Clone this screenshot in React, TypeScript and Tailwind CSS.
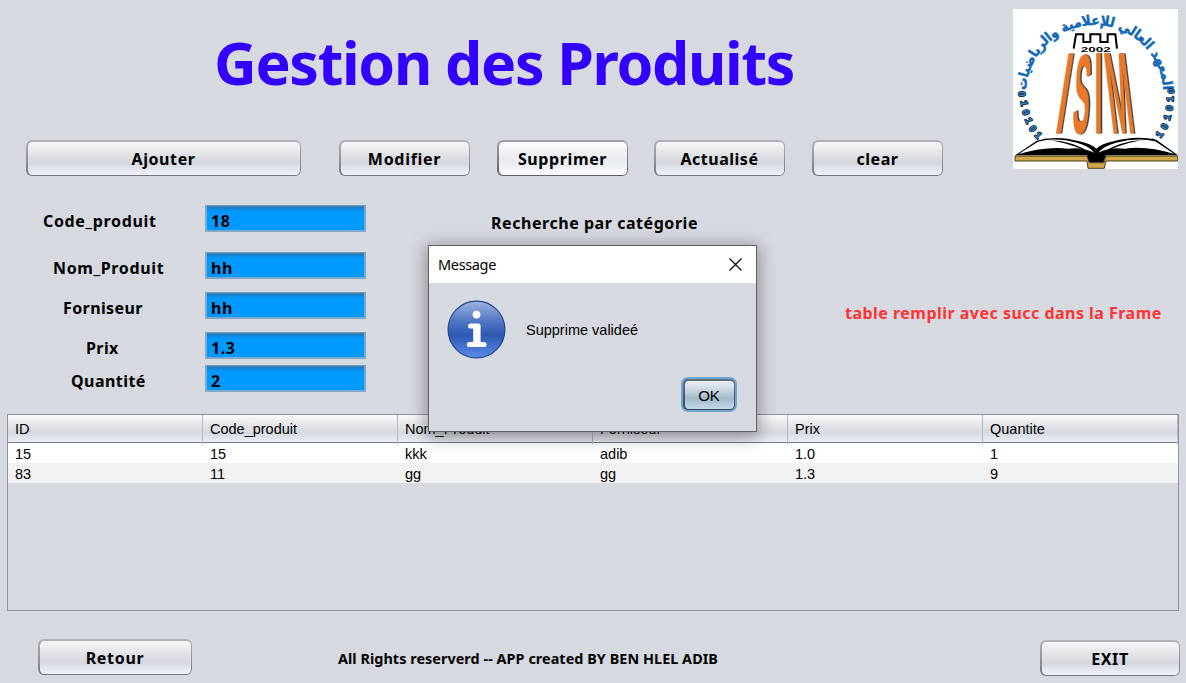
import type { ReactNode } from "react";

const LABEL = "font-['Noto_Sans',sans-serif] font-bold text-[16px] whitespace-nowrap text-black";

function NimbusButton({ children, className, textClass = "", bright = false }: { children: ReactNode; className: string; textClass?: string; bright?: boolean }) {
  const fill = bright
    ? "bg-[linear-gradient(#fbfcfd,#e9ebf0_50%,#e9ecf1_65%,#fdfdff)]"
    : "bg-[linear-gradient(#f6f7f8,#dddfe3_45%,#d5d8de_65%,#f0f3fa)]";
  const edge = bright
    ? "bg-[linear-gradient(#a0a3a9,#5c5f66)]"
    : "bg-[linear-gradient(#b0b3b8,#74777d)]";
  return (
    <button className={`h-9 shrink-0 rounded-[6px] p-[1.5px] ${edge} ${className}`}>
      <span className={`flex h-full items-center justify-center rounded-[4.5px] pt-[2px] ${fill} ${LABEL} ${textClass}`}>{children}</span>
    </button>
  );
}

function FieldRow({ label, value, className, labelClass }: { label: string; value: string; className: string; labelClass: string }) {
  return (
    <div className={`flex h-[27px] ${className}`}>
      <label className={`w-[205px] shrink-0 pt-[3px] leading-[27px] ${LABEL} ${labelClass}`}>{label}</label>
      <div className={`w-[161px] overflow-hidden border-2 border-t-[1px] border-[#7fa9cb] border-t-[#6c9dbd] bg-[linear-gradient(#4282ae,#1a7fc9_2px,#0a92f1_4px,#0099ff_6px)] pt-[2px] pl-[4px] leading-[27px] tracking-[0.5px] ${LABEL}`}>{value}</div>
    </div>
  );
}

const LEFT_BITS: [number, number, number, string][] = [
  [48, 282, 88, "0"], [55, 310, 80, "1"], [60, 337, 74, "0"], [69, 362, 66, "1"], [80, 386, 58, "0"], [97, 406, 48, "1"], [115, 427, 40, "0"],
];
const RIGHT_BITS: [number, number, number, string][] = [
  [493, 273, -90, "0"], [492, 297, -88, "1"], [490, 324, -82, "0"], [484, 352, -74, "1"], [475, 379, -64, "0"], [460, 403, -54, "1"], [441, 427, -44, "0"],
];

function Logo() {
  return (
    <svg className="mt-[9px] h-[160px] w-[165px] shrink-0 bg-white" viewBox="21 27 495 480">
      <defs>
        <path id="arc" d="M60 290 V281 A206 206 0 0 1 472 281 V290" />
      </defs>
      <text fontFamily="'DejaVu Sans Condensed', 'DejaVu Sans'" fontWeight="bold" fontSize="41" fill="#1268b8" stroke="#1268b8" strokeWidth="1.5" direction="rtl">
        <textPath href="#arc" startOffset="50%" textAnchor="middle">المعهد العالي للإعلامية والرياضيات</textPath>
      </text>
      <path d="M203 146 L210 103 H232 V126 H253 V103 H283 V126 H305 V103 H328 L333 146" fill="none" stroke="#000" strokeWidth="6" />
      <text x="224" y="157" fontFamily="Liberation Sans" fontWeight="bold" fontSize="20" textLength="90" lengthAdjust="spacingAndGlyphs">2002</text>
      <g fontFamily="Liberation Sans" fontWeight="bold" fontSize="300" fill="#e8792b" stroke="#e8792b" strokeWidth="2">
        <g fill="#444" stroke="#444" transform="translate(4 0)">
          <text transform="matrix(.33 0 -.18 1.15 144 400)">I</text>
          <text transform="matrix(.25 0 -.075 1.12 196 398)">S</text>
          <text transform="matrix(.3 0 0 1.15 265 400)">I</text>
          <text transform="matrix(.29 0 .14 1.15 317 400)">M</text>
        </g>
        <text transform="matrix(.33 0 -.18 1.15 144 400)">I</text>
        <text transform="matrix(.25 0 -.075 1.12 196 398)">S</text>
        <text transform="matrix(.3 0 0 1.15 265 400)">I</text>
        <text transform="matrix(.29 0 .14 1.15 317 400)">M</text>
      </g>
      <g fontFamily="Liberation Sans" fontWeight="bold" fontSize="29" fill="#2f86cf" stroke="#0b1c33" strokeWidth="4.5" paintOrder="stroke" textAnchor="middle">
        {[...LEFT_BITS, ...RIGHT_BITS].map(([x, y, r, d], i) => (
          <text key={i} transform={`translate(${x} ${y}) rotate(${r})`} y="10">{d}</text>
        ))}
      </g>
      <path d="M27 468 H243 L250 488 H294 L300 468 H515 V483 H300 L295 505 H246 L243 483 H27Z" fill="#d3a648" stroke="#2d2208" strokeWidth="2.5" />
      <path d="M27 466 L92 422 Q150 405 220 424 Q258 433 271 446 Q284 433 322 424 Q392 405 452 420 L516 466 H300 L292 487 H250 L243 466Z" fill="#000" />
      <path d="M38 462 L96 425 Q150 411 213 428 Q250 438 264 458 Q230 440 185 446 Q120 438 38 462Z" fill="#fff" />
      <path d="M505 462 L448 424 Q392 411 330 428 Q292 438 277 458 Q310 440 357 446 Q420 436 505 462Z" fill="#fff" />
      <path d="M135 421 Q200 422 264 464 Q205 434 135 421Z M408 420 Q342 422 278 464 Q337 434 408 420Z" fill="#000" />
    </svg>
  );
}

const COLUMNS = ["ID", "Code_produit", "Nom_Produit", "Forniseur", "Prix", "Quantite"];
const ROWS = [
  ["15", "15", "kkk", "adib", "1.0", "1"],
  ["83", "11", "gg", "gg", "1.3", "9"],
];

function ProductTable() {
  return (
    <div className="ml-[7px] h-[197px] w-[1172px] shrink-0 border border-[#9194a0] font-['Liberation_Sans',sans-serif] text-[14.5px] text-black">
      <div className="grid h-[28px] grid-cols-6 border-b border-[#777a85] bg-[linear-gradient(#f8f9fb,#dfe1e5_45%,#d6d9df_65%,#e9edf5)]">
        {COLUMNS.map((c) => (
          <div key={c} className="border-r border-[#b5b8c0] pl-[7px] leading-[29px]">{c}</div>
        ))}
      </div>
      {ROWS.map((row, r) => (
        <div key={r} className={`grid h-5 grid-cols-6 ${r % 2 ? "bg-[#f2f2f2]" : "bg-white"}`}>
          {row.map((cell, i) => (
            <div key={i} className="pl-[7px] leading-[23px]">{cell}</div>
          ))}
        </div>
      ))}
    </div>
  );
}

function MessageDialog() {
  return (
    <div className="absolute top-[245px] left-[428px] flex h-[187px] w-[329px] flex-col border border-[#5f6166] bg-[#d6d9df] shadow-[0_3px_16px_2px_rgba(0,0,0,0.36)]">
      <div className="flex h-[37px] shrink-0 items-center justify-between bg-white pr-[14px] pl-[9px]">
        <span className="font-['Noto_Sans',sans-serif] text-[14.5px] tracking-[-0.35px] text-black">Message</span>
        <svg className="h-[13px] w-[13px]" viewBox="0 0 13 13">
          <path d="M.5 .5 L12.5 12.5 M12.5 .5 L.5 12.5" stroke="#000" strokeWidth="1.15" />
        </svg>
      </div>
      <div className="flex h-[94px] items-start pt-[17px] pl-[18px]">
        <svg className="h-[59px] w-[59px]" viewBox="0 0 59 59">
          <defs>
            <linearGradient id="info" x1="0" y1="0" x2="0" y2="1">
              <stop offset="0" stopColor="#9db4e2" />
              <stop offset=".35" stopColor="#5077c2" />
              <stop offset=".6" stopColor="#2b59b3" />
              <stop offset="1" stopColor="#5b8ae8" />
            </linearGradient>
          </defs>
          <circle cx="29.5" cy="29.5" r="28.4" fill="url(#info)" stroke="#1f468f" strokeWidth="1.2" />
          <circle cx="29.5" cy="14.6" r="3.9" fill="#fff" />
          <path d="M23.2 23.4 H31.2 Q33.6 23.4 33.6 25.8 V42 H37.4 Q39.6 42 39.6 44.5 T37.4 47 H22 Q19.8 47 19.8 44.5 T22 42 H26.2 V28.4 H23.2 Q21 28.4 21 25.9 T23.2 23.4Z" fill="#fff" />
        </svg>
        <span className="ml-[20px] font-['Liberation_Sans',sans-serif] text-[14.5px] leading-[61px] text-black">Supprime valideé</span>
      </div>
      <div className="flex justify-end pr-[19px]">
        <button className="h-[35px] w-[56px] rounded-[7px] bg-[#73a4cf] p-[2px]">
          <span className="flex h-full rounded-[5px] bg-[linear-gradient(#5f7284,#34495d)] p-[1.5px]">
            <span className="flex h-full w-full items-center justify-center rounded-[4px] bg-[linear-gradient(#edf1f6,#bccad9_45%,#a3b8cb_62%,#c4d8e9)] pt-[3px] font-['Liberation_Sans',sans-serif] text-[15px] text-black">OK</span>
          </span>
        </button>
      </div>
    </div>
  );
}

export default function App() {
  return (
    <main className="relative flex h-[683px] w-[1186px] flex-col overflow-hidden bg-[#d6d9df]">
      <header className="flex h-[205px] shrink-0">
        <div className="flex w-[1013px] shrink-0 flex-col">
          <h1 className="h-[140px] pt-[22px] pl-[214px] font-['Noto_Sans',sans-serif] text-[59px] leading-[80px] font-bold tracking-[-1.3px] whitespace-nowrap text-[#3300ff]">Gestion des Produits</h1>
          <div className="flex pl-[26px]">
            <NimbusButton className="w-[275px]" textClass="tracking-[0.6px]">Ajouter</NimbusButton>
            <NimbusButton className="ml-[38px] w-[131px]" textClass="tracking-[0.7px]">Modifier</NimbusButton>
            <NimbusButton bright className="ml-[27px] w-[131px]" textClass="tracking-[0.6px]">Supprimer</NimbusButton>
            <NimbusButton className="ml-[26px] w-[131px]" textClass="tracking-[0.5px]">Actualisé</NimbusButton>
            <NimbusButton className="ml-[27px] w-[131px]" textClass="tracking-[0.5px]">clear</NimbusButton>
          </div>
        </div>
        <Logo />
      </header>
      <section className="flex h-[209px] shrink-0">
        <div className="flex w-[367px] shrink-0 flex-col">
          <FieldRow label="Code_produit" value="18" className="mb-[20px]" labelClass="pl-[43px] tracking-[0.65px]" />
          <FieldRow label="Nom_Produit" value="hh" className="mb-[13px]" labelClass="pl-[53px] tracking-[0.65px]" />
          <FieldRow label="Forniseur" value="hh" className="mb-[13px]" labelClass="pl-[63px] tracking-[0.4px]" />
          <FieldRow label="Prix" value="1.3" className="mb-[6px]" labelClass="pl-[86px] tracking-[0.4px]" />
          <FieldRow label="Quantité" value="2" className="" labelClass="pl-[71px] tracking-[0.45px]" />
        </div>
        <p className={`w-[478px] shrink-0 pt-[5px] pl-[124px] leading-[27px] tracking-[0.55px] ${LABEL}`}>Recherche par catégorie</p>
        <p className="pt-[95px] font-['Noto_Sans',sans-serif] text-[16px] leading-[27px] font-bold tracking-[0.48px] whitespace-nowrap text-[#ff3333]">table remplir avec succ dans la Frame</p>
      </section>
      <ProductTable />
      <footer className="flex h-[72px] shrink-0 pt-[28px] pl-[38px]">
        <NimbusButton className="w-[154px]" textClass="tracking-[0.7px]">Retour</NimbusButton>
        <p className="ml-[146px] w-[702px] shrink-0 pt-[6px] font-['Noto_Sans',sans-serif] text-[14.4px] leading-[27px] font-bold tracking-[0.05px] whitespace-nowrap text-black">All Rights reserverd -- APP created BY BEN HLEL ADIB</p>
        <NimbusButton className="mt-px w-[140px]" textClass="tracking-[0.6px]">EXIT</NimbusButton>
      </footer>
      <MessageDialog />
    </main>
  );
}
